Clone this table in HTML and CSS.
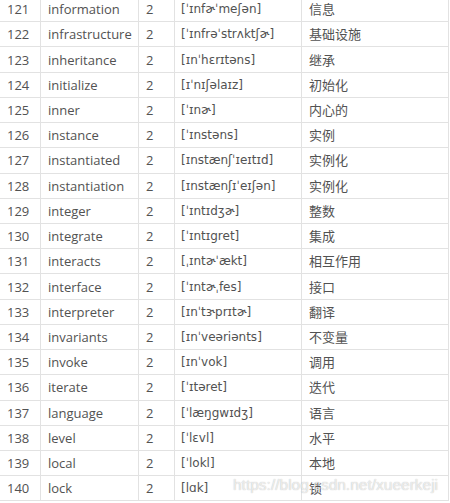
FILE: index.html
```html
<!DOCTYPE html>
<html lang="zh-CN">
<head>
<meta charset="utf-8">
<title>词汇表</title>
<link rel="stylesheet" href="styles.css">
</head>
<body>
<div class="page">
  <table class="vocab">
    <colgroup>
      <col class="c-num"><col class="c-word"><col class="c-lvl"><col class="c-ipa"><col class="c-zh">
    </colgroup>
    <tbody>
      <tr><td>121</td><td>information</td><td>2</td><td>[ˈɪnfɚˈmeʃən]</td><td>信息</td></tr>
      <tr><td>122</td><td>infrastructure</td><td>2</td><td>[ˈɪnfrəˈstrʌktʃɚ]</td><td>基础设施</td></tr>
      <tr><td>123</td><td>inheritance</td><td>2</td><td>[ɪnˈhɛrɪtəns]</td><td>继承</td></tr>
      <tr><td>124</td><td>initialize</td><td>2</td><td>[ɪˈnɪʃəlaɪz]</td><td>初始化</td></tr>
      <tr><td>125</td><td>inner</td><td>2</td><td>[ˈɪnɚ]</td><td>内心的</td></tr>
      <tr><td>126</td><td>instance</td><td>2</td><td>[ˈɪnstəns]</td><td>实例</td></tr>
      <tr><td>127</td><td>instantiated</td><td>2</td><td>[ɪnstænʃˈɪeɪtɪd]</td><td>实例化</td></tr>
      <tr><td>128</td><td>instantiation</td><td>2</td><td>[ɪnstænʃɪˈeɪʃən]</td><td>实例化</td></tr>
      <tr><td>129</td><td>integer</td><td>2</td><td>[ˈɪntɪdʒɚ]</td><td>整数</td></tr>
      <tr><td>130</td><td>integrate</td><td>2</td><td>[ˈɪntɪgret]</td><td>集成</td></tr>
      <tr><td>131</td><td>interacts</td><td>2</td><td>[ˌɪntɚˈækt]</td><td>相互作用</td></tr>
      <tr><td>132</td><td>interface</td><td>2</td><td>[ˈɪntɚˌfes]</td><td>接口</td></tr>
      <tr><td>133</td><td>interpreter</td><td>2</td><td>[ɪnˈtɝprɪtɚ]</td><td>翻译</td></tr>
      <tr><td>134</td><td>invariants</td><td>2</td><td>[ɪnˈveəriənts]</td><td>不变量</td></tr>
      <tr><td>135</td><td>invoke</td><td>2</td><td>[ɪnˈvok]</td><td>调用</td></tr>
      <tr><td>136</td><td>iterate</td><td>2</td><td>[ˈɪtəret]</td><td>迭代</td></tr>
      <tr><td>137</td><td>language</td><td>2</td><td>[ˈlæŋgwɪdʒ]</td><td>语言</td></tr>
      <tr><td>138</td><td>level</td><td>2</td><td>[ˈlɛvl]</td><td>水平</td></tr>
      <tr><td>139</td><td>local</td><td>2</td><td>[ˈlokl]</td><td>本地</td></tr>
      <tr><td>140</td><td>lock</td><td>2</td><td>[lɑk]</td><td>锁</td></tr>
    </tbody>
  </table>
  <div class="watermark">https://blog.csdn.net/xueerkeji</div>
</div>
</body>
</html>
```

FILE: styles.css
```css
html, body {
  margin: 0;
  padding: 0;
  background: #ffffff;
  overflow: hidden;
}

.page {
  position: relative;
  width: 450px;
  height: 503px;
  overflow: hidden;
}

.vocab {
  border-collapse: collapse;
  table-layout: fixed;
  width: 449px;
  margin-top: -4px;
  margin-left: -1px;
  font-family: "Open Sans", "Noto Sans CJK SC", sans-serif;
  font-size: 13px;
  color: #525252;
}

.c-num { width: 41px; }
.c-word { width: 98px; }
.c-lvl { width: 36px; }
.c-ipa { width: 127px; }
.c-zh { width: 147px; }

.vocab td {
  height: 25.23px;
  padding: 0 0 0 7px;
  border: 1px solid #e2e2e2;
  white-space: nowrap;
  overflow: hidden;
  vertical-align: middle;
  box-sizing: border-box;
  line-height: 16px;
}

.vocab td:nth-child(4) {
  padding-left: 6px;
  font-family: "DejaVu Sans", "Open Sans", sans-serif;
  font-size: 12px;
}

.vocab td:nth-child(5) {
  font-family: "Noto Sans CJK SC", sans-serif;
  font-size: 13px;
}

.watermark {
  position: absolute;
  left: 233px;
  top: 476px;
  font-family: "Liberation Sans", Arial, sans-serif;
  font-size: 15.5px;
  color: rgba(255, 255, 255, 0.7);
  text-shadow: 0 0 1px rgba(0, 0, 0, 0.3);
  white-space: nowrap;
}
```
